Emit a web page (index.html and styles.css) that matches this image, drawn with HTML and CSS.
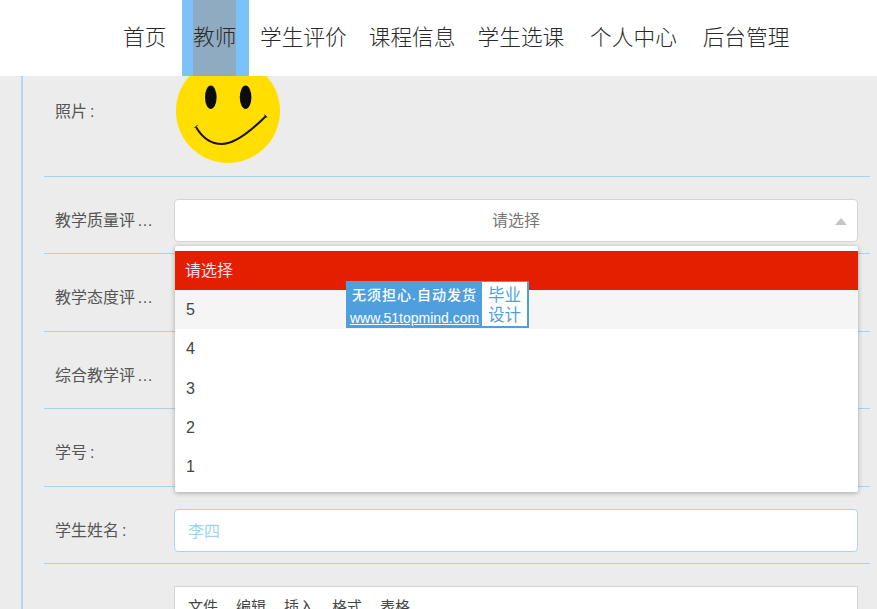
FILE: index.html
```html
<!DOCTYPE html>
<html lang="zh">
<head>
<meta charset="utf-8">
<title>教师</title>
<link rel="stylesheet" href="styles.css">
</head>
<body>
<header class="topbar">
  <nav class="nav">
    <a class="nav-item">首页</a>
    <a class="nav-item nav-item-active"><span class="nav-text">教师</span></a>
    <a class="nav-item">学生评价</a>
    <a class="nav-item">课程信息</a>
    <a class="nav-item">学生选课</a>
    <a class="nav-item nav-item-wide">个人中心</a>
    <a class="nav-item nav-item-wide">后台管理</a>
  </nav>
</header>
<main class="page">
  <form class="form">
    <div class="row row-photo">
      <label class="label">照片<span class="colon">:</span></label>
      <svg class="smiley" viewBox="0 0 104 104" width="104" height="104" aria-hidden="true">
        <circle cx="52" cy="52" r="52" fill="#ffde00"/>
        <ellipse cx="34.800" cy="38.300" rx="5.800" ry="11.700" fill="#0c0c0c"/>
        <ellipse cx="69.600" cy="38.300" rx="5.800" ry="11.700" fill="#0c0c0c"/>
        <path d="M20 68C27 80 36 85 46 85C60 85 76 71 90 57" fill="none" stroke="#1a1204" stroke-width="2"/>
        <path d="M18.500 69L21.500 66M88.500 55.500L91 58.500" fill="none" stroke="#1a1204" stroke-width="1"/>
      </svg>
    </div>
    <div class="row">
      <label class="label">教学质量评<span class="dots">…</span></label>
      <div class="control select">请选择<span class="caret"></span></div>
    </div>
    <div class="row">
      <label class="label">教学态度评<span class="dots">…</span></label>
    </div>
    <div class="row">
      <label class="label">综合教学评<span class="dots">…</span></label>
    </div>
    <div class="row">
      <label class="label">学号<span class="colon">:</span></label>
    </div>
    <div class="row">
      <label class="label">学生姓名<span class="colon">:</span></label>
      <div class="control input">李四</div>
    </div>
    <div class="row row-editor">
      <div class="label"></div>
      <div class="editor">
        <span>文件</span><span>编辑</span><span>插入</span><span>格式</span><span>表格</span>
      </div>
    </div>
  </form>
</main>
<ul class="dropdown">
  <li class="option option-selected">请选择</li>
  <li class="option option-hover">5</li>
  <li class="option">4</li>
  <li class="option">3</li>
  <li class="option">2</li>
  <li class="option">1</li>
</ul>
<aside class="badge">
  <div class="badge-left">
    <div class="badge-slogan">无须担心.自动发货</div>
    <div class="badge-url">www.51topmind.com</div>
  </div>
  <div class="badge-right">毕业<br>设计</div>
</aside>
</body>
</html>
```
FILE: styles.css
```css
* { box-sizing: border-box; }
html, body { margin: 0; height: 609px; overflow: hidden; }
body {
  background: #ececec;
  color: #555;
  font-family: "Liberation Sans", "Noto Sans CJK SC", sans-serif;
  font-size: 16px;
}
.topbar {
  position: fixed;
  top: 0; left: 0; right: 0;
  height: 76px;
  background: #fff;
  z-index: 2;
}
.nav { display: flex; height: 76px; padding-left: 112px; }
.nav-item {
  display: block;
  padding: 0 11px;
  line-height: 76px;
  font-size: 21.700px;
  font-weight: 300;
  color: #2a2a2a;
}
.nav-item-active { background: #7cc2fa; padding: 0 12.600px 0 11px; margin-left: 4.600px; }
.nav-text { display: block; background: #8fabc2; }
.nav-item-wide { margin-left: 3.800px; }
.page { padding: 36px 7px 0 21px; }
.form { border-left: 2px solid #b5d6f3; padding-left: 21px; }
.row {
  display: flex;
  height: 77.400px;
  padding-top: 22px;
  border-bottom: 1px solid #a8d2f0;
}
.row-photo { height: 141px; }
.label {
  width: 130px;
  padding: 0 0 0 11px;
  flex: none;
  line-height: 43px;
  color: #555;
  white-space: nowrap;
}
.colon { margin-left: 3px; }
.dots { margin-left: 2px; }
.row-photo .label { line-height: 107px; }
.smiley { margin: 1px 0 0 2px; }
.control {
  width: 684px;
  height: 43px;
  background: #fff;
  border-radius: 4px;
  line-height: 43px;
}
.select {
  position: relative;
  border: 1px solid #d4d4d4;
  line-height: 41px;
  text-align: center;
  color: #777;
}
.caret {
  position: absolute;
  right: 10px; top: 18px;
  border: 6px solid transparent;
  border-top: 0;
  border-bottom: 7px solid #c4c4c4;
}
.input {
  border: 1px solid #a9d4f2;
  line-height: 43px;
  padding-left: 13px;
  color: #9fd3ec;
}
.row-editor { border: 0; }
.editor {
  width: 684px;
  height: 100px;
  background: #fff;
  border: 1px solid #d4d4d4;
  padding: 8px 0 0 13px;
  display: flex;
  gap: 18px;
  font-size: 15px;
  color: #444;
}
.dropdown {
  position: absolute;
  left: 175px; top: 246px;
  width: 683px; height: 246px;
  margin: 0; padding: 5px 0 0;
  list-style: none;
  background: #fff;
  box-shadow: 0 1px 5px rgba(0,0,0,.3);
  border-radius: 2px;
  z-index: 1;
}
.option { height: 39.200px; line-height: 39px; padding-left: 11px; color: #444; }
.option-selected { background: #e41f00; color: #fde; padding-left: 10px; }
.option-hover { background: #f5f5f5; }
.badge {
  position: absolute;
  left: 346px; top: 281px;
  width: 183px; height: 47px;
  background: #4f9fdf;
  display: flex;
  z-index: 1;
  color: #fff;
}
.badge-left { width: 136px; padding-left: 4px; }
.badge-slogan { font-size: 14px; line-height: 29px; letter-spacing: 1px; padding-left: 2px; font-weight: 500; white-space: nowrap; }
.badge-url { font-size: 14px; line-height: 17px; text-decoration: underline; white-space: nowrap; }
.badge-right {
  margin: 1px 2px 2px 0;
  width: 45px;
  background: #fff;
  color: #4f9fdf;
  font-size: 16.500px;
  line-height: 20px;
  padding-top: 3px;
  text-align: center;
}
```
